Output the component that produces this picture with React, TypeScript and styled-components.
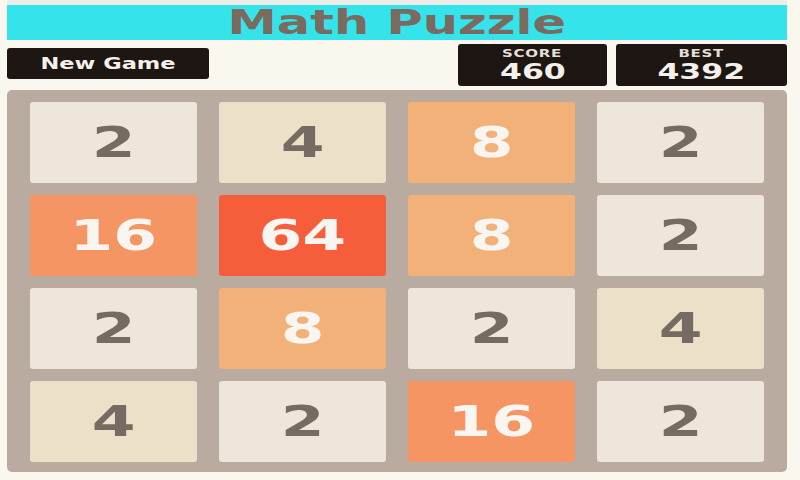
import styled, { createGlobalStyle } from 'styled-components';

const GlobalStyle = createGlobalStyle`
    html, body {
        margin: 0;
        padding: 0;
        background: #faf7ef;
    }
    body {
        font-family: 'DejaVu Sans', 'Liberation Sans', sans-serif;
    }
`;

type TileValue = 2 | 4 | 8 | 16 | 32 | 64;

const tileColors: Record<TileValue, { bg: string; fg: string }> = {
    2: { bg: '#eee5db', fg: '#766b63' },
    4: { bg: '#ede0c8', fg: '#766b63' },
    8: { bg: '#f2b179', fg: '#f9f6f2' },
    16: { bg: '#f59563', fg: '#f9f6f2' },
    32: { bg: '#f67c5f', fg: '#f9f6f2' },
    64: { bg: '#f65e3b', fg: '#f9f6f2' },
};

const grid: TileValue[][] = [
    [2, 4, 8, 2],
    [16, 64, 8, 2],
    [2, 8, 2, 4],
    [4, 2, 16, 2],
];

const App = () => {
    return (
        <>
            <GlobalStyle />
            <Page>
                <TitleBar>
                    <Stretch>Math Puzzle</Stretch>
                </TitleBar>
                <Controls>
                    <NewGameButton>
                        <Stretch>New Game</Stretch>
                    </NewGameButton>
                    <Scores>
                        <ScoreBox>
                            <ScoreLabel>
                                <Stretch>SCORE</Stretch>
                            </ScoreLabel>
                            <ScoreValue>
                                <Stretch>460</Stretch>
                            </ScoreValue>
                        </ScoreBox>
                        <ScoreBox $wide>
                            <ScoreLabel>
                                <Stretch>BEST</Stretch>
                            </ScoreLabel>
                            <ScoreValue>
                                <Stretch>4392</Stretch>
                            </ScoreValue>
                        </ScoreBox>
                    </Scores>
                </Controls>
                <Board>
                    {grid.flat().map((value, i) => (
                        <Tile key={i} $value={value}>
                            <Stretch>{value}</Stretch>
                        </Tile>
                    ))}
                </Board>
            </Page>
        </>
    );
};

export default App;

const Page = styled.div`
    width: 780px;
    height: 475px;
    margin-left: 7px;
    border-top: 5px solid #edece9;
    display: flex;
    flex-direction: column;
`;

const Stretch = styled.span`
    display: inline-block;
    transform: scaleX(1.5);
`;

const TitleBar = styled.div`
    height: 35px;
    background: #35e4ea;
    color: #7a6a60;
    font-size: 33px;
    font-weight: bold;
    display: flex;
    align-items: center;
    justify-content: center;
    line-height: 1;
`;

const Controls = styled.div`
    height: 42px;
    margin-top: 4px;
    display: flex;
    align-items: center;
    justify-content: space-between;
`;

const NewGameButton = styled.button`
    width: 202px;
    height: 31px;
    margin-top: -3px;
    border: none;
    border-radius: 3px;
    background: #1e1613;
    color: #f4f0ec;
    font-family: 'DejaVu Sans', sans-serif;
    font-weight: bold;
    font-size: 15px;
    padding: 0;
`;

const Scores = styled.div`
    display: flex;
    gap: 9px;
    height: 100%;
`;

const ScoreBox = styled.div<{ $wide?: boolean }>`
    width: ${(p) => (p.$wide ? 171 : 149)}px;
    height: 100%;
    border-radius: 3px;
    background: #1e1613;
    color: #f4f0ec;
    display: flex;
    flex-direction: column;
    align-items: center;
    justify-content: center;
    padding-top: 2px;
    box-sizing: border-box;
    font-weight: bold;
    line-height: 1;
`;

const ScoreLabel = styled.div`
    font-size: 10px;
    letter-spacing: 0.5px;
    color: #e6dfd8;
    margin-bottom: 3px;
`;

const ScoreValue = styled.div`
    font-size: 21px;
`;

const Board = styled.div`
    margin-top: 4px;
    height: 382px;
    box-sizing: border-box;
    padding: 12px 23px 10px;
    background: #b9ab9f;
    border-radius: 5px;
    display: grid;
    grid-template-columns: repeat(4, 1fr);
    grid-template-rows: repeat(4, 1fr);
    column-gap: 22px;
    row-gap: 12px;
`;

const Tile = styled.div<{ $value: TileValue }>`
    border-radius: 3px;
    background: ${(p) => tileColors[p.$value].bg};
    color: ${(p) => tileColors[p.$value].fg};
    display: flex;
    align-items: center;
    justify-content: center;
    font-size: 42px;
    font-weight: bold;
    line-height: 1;
`;
